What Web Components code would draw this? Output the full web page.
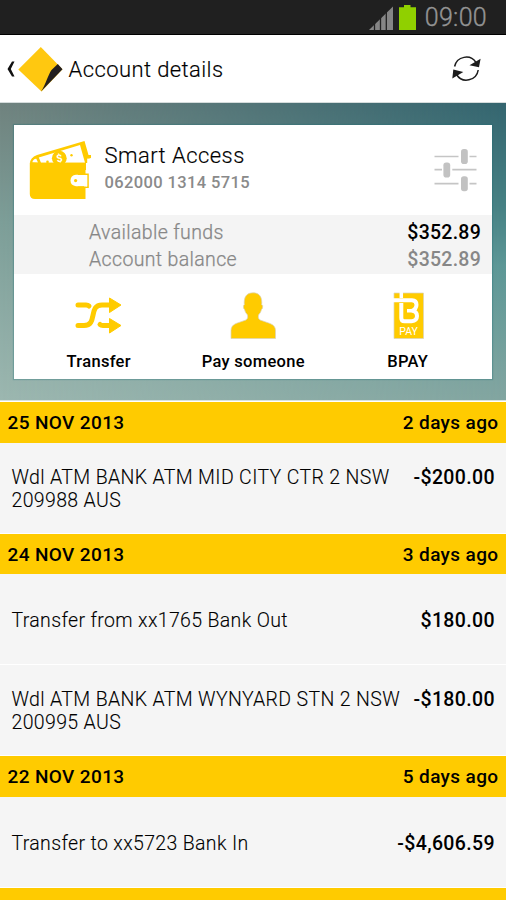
<!DOCTYPE html>
<html lang="en">
<head>
<meta charset="utf-8">
<title>Account details</title>
<style>
body{margin:0;width:506px;height:900px;overflow:hidden;background:#f5f5f5;color:#000;font-family:Roboto,"Liberation Sans",sans-serif;}
</style>
</head>
<body>
<bank-app></bank-app>
<script>
const define = (name, html) => customElements.define(name, class extends HTMLElement {
  connectedCallback() {
    if (this.shadowRoot) return;
    const t = document.createElement('template');
    t.innerHTML = html;
    this.attachShadow({mode: 'open'}).append(t.content.cloneNode(true));
  }
});

define('status-bar', `
<style>
:host{display:flex;box-sizing:border-box;height:35px;background:#202020;border-bottom:1px solid #000;justify-content:flex-end;align-items:flex-start;padding-right:19px;color:#959595}
svg{display:block}
span{font:300 25px/36px Roboto,sans-serif;letter-spacing:.3px;-webkit-text-stroke:.35px #959595;margin-left:7.5px}
</style>
<svg width="48" height="34" viewBox="369 0 48 34">
<path d="M369 30 L393 6.500V30Z" fill="#858585"/>
<path d="M374.500 22V30M380.500 16V30M386.300 10V30" stroke="#202020" stroke-width="1.300"/>
<path d="M399 7.300H404V5H410.500V7.300H416V30H399Z" fill="#90d000"/>
</svg><span>09:00</span>`);

define('title-bar', `
<style>
:host{display:flex;box-sizing:border-box;height:68px;background:#fff;border-bottom:1px solid #d5dcdc;align-items:center}
svg{display:block;flex:none}
h1{flex:1;margin:2px 0 0 4.600px;font:300 22px/30px Roboto,sans-serif;letter-spacing:.4px;-webkit-text-stroke:.15px #000;white-space:nowrap}
</style>
<svg width="64" height="67" viewBox="0 35 64 67">
<path d="M14.500 61.500H12L7.500 69 12 76.500H14.500L10.800 69Z" fill="#111"/>
<path d="M40.800 47 62.500 69.300 41.500 91.500 18.300 69.500Z" fill="#ffc810"/>
<path d="M57.800 64 62.500 69.300 41 91.500C46 84 48 75 51.500 70Z" fill="#231f20"/>
</svg>
<h1>Account details</h1>
<svg width="56" height="67" viewBox="450 35 56 67">
<g fill="none" stroke="#1c1c1c" stroke-width="1.500"><path d="M454.600 66.500A11.800 11.800 0 0 1 476 62.500"/><path d="M478.200 70A11.800 11.800 0 0 1 456.500 74.500"/></g>
<path d="M480.600 58.700 479 67.300 469.500 65.200Z M452.300 78.500 453.300 69.500 463.300 72Z" fill="#1c1c1c"/>
</svg>`);

define('action-tile', `
<style>
:host{display:flex;flex-direction:column;align-items:center;width:154.500px}
.i{height:70px}
.l{font:500 16.500px/20px Roboto,sans-serif;letter-spacing:.3px;white-space:nowrap}
</style>
<div class="i"><slot name="icon"></slot></div><div class="l"><slot></slot></div>`);

define('account-card', `
<style>
:host{display:block;width:478px;height:254px;background:#fff;box-shadow:0 0 1px 1px rgba(30,110,115,.3);position:relative}
header{display:flex;height:90px}
svg{display:block;flex:none}
.t{flex:1;padding-left:13.500px;white-space:nowrap}
.n{font:300 22px/28px Roboto,sans-serif;letter-spacing:.45px;-webkit-text-stroke:.15px #000;padding-top:17px}
.a{font:500 16.500px/20px Roboto,sans-serif;letter-spacing:.38px;color:#8a8a8a;margin-top:3px}
.f{height:59px;background:#f4f4f4;box-sizing:border-box;padding:5px 11px 0 75px;font:300 19.500px/26.500px Roboto,sans-serif;letter-spacing:.36px;color:#878787;-webkit-text-stroke:.25px #878787}
.f div{display:flex;justify-content:space-between}
b{font-weight:500;letter-spacing:.25px;-webkit-text-stroke:0}
.k{color:#000}
.acts{display:flex;height:97px;padding:8px 0 0 7.500px}
</style>
<header>
<svg width="77" height="90" viewBox="14 125 77 90">
<path d="M30 170V163.500Q30 157.500 37 155L84.500 141 88.500 155H94.500V158H89.500L91 163H86V170Z" fill="#ffcb00"/>
<path d="M84.500 155.500H91V158.200H84.500Z" fill="#ffcb00"/>
<path d="M87.200 158.600H92V165H87.200Z" fill="#fff"/>
<path d="M32.300 162.200Q33.300 158.500 36.300 158.700L38 162.500Z" fill="#fff"/>
<path d="M38.800 157.500 80 145 85 162.700H41Z" fill="#fff"/>
<circle cx="59.300" cy="158.200" r="7.400" fill="#ffcb00"/>
<circle cx="71.500" cy="155.300" r="1.200" fill="#ffcb00"/><circle cx="47.500" cy="161.900" r="1.300" fill="#ffcb00"/>
<text x="59.300" y="162" text-anchor="middle" font-family="Roboto" font-weight="700" font-size="10.500" fill="#fff" transform="rotate(-12 59.300 158)">$</text>
<path d="M29.800 162.700H85.500V199H35Q29.800 199 29.800 194Z" fill="#ffcb00"/>
<path d="M85.500 174.800H76Q70.500 175.500 70.500 180.500T76 186.200H85.500" fill="#fff"/>
<path d="M78 174.300H88V187.200H78" fill="none" stroke="#ffcb00" stroke-width="1.600"/>
<path d="M84 175.100H87.200V186.400H84Z" fill="#fff"/>
<circle cx="75.600" cy="180.600" r="1.600" fill="#ffcb00"/>
</svg>
<div class="t"><div class="n">Smart Access</div><div class="a">062000 1314 5715</div></div>
<svg width="62" height="90" viewBox="430 125 62 90">
<path d="M434.500 156.500H458.500M469.500 156.500H476.500M434.500 169.700H442M452.300 169.700H476.500M434.500 183.700H458.500M469.500 183.700H476.500" stroke="#c5c5c5" stroke-width="1.700"/>
<g fill="#c2c2c2"><rect x="461" y="149" width="6.800" height="15" rx="2.800"/><rect x="443.400" y="162.500" width="6.800" height="15" rx="2.800"/><rect x="461" y="176.300" width="6.800" height="15" rx="2.800"/></g>
</svg>
</header>
<div class="f"><div><span>Available funds</span><b class="k">$352.89</b></div><div><span>Account balance</span><b>$352.89</b></div></div>
<div class="acts">
<action-tile><svg slot="icon" width="50" height="70" viewBox="74 282 50 70">
<g fill="none" stroke="#ffcb00" stroke-width="5" stroke-linecap="round"><path d="M78 305H86Q88 305 89 306"/><path d="M78 325.500H84C98 325.500 88 305 102 305H110"/><path d="M100 324.500Q101 325.500 103 325.500H110"/></g>
<path d="M109.500 298V312.500L121 305Z M109.500 318.500V333L121 325.500Z" fill="#ffcb00" stroke="#ffcb00" stroke-width="1" stroke-linejoin="round"/></svg>Transfer</action-tile>
<action-tile><svg slot="icon" width="50" height="70" viewBox="228 282 50 70">
<path d="M231 338.500V330.500Q231 325.500 236 323.500L246 320Q248.500 318.500 247.500 315Q245 312.500 244.500 309.500Q243 308.500 243.500 305.500L244.300 305C243.500 296.500 247 292.800 253 292.800S262.500 296.500 261.700 305L262.700 305.500Q263 308.500 261.500 309.500Q261 312.500 258.500 315Q257.500 318.500 260 320L270 323.500Q275.500 325.500 275.500 330.500V338.500Z" fill="#ffcb00" stroke="#d8d2bc" stroke-width=".7"/></svg>Pay someone</action-tile>
<action-tile><svg slot="icon" width="50" height="70" viewBox="382 282 50 70">
<path d="M393 293H422.500V338.500H393Z" fill="#ffcb00" stroke="#d8d2bc" stroke-width=".7"/>
<path d="M392 300.300H411Q415.500 300.500 415.500 304.800T411 310.800Q416 311.300 416 316T410.500 321.300H403.500Q400.300 321.300 400.300 318V303" fill="none" stroke="#fff" stroke-width="4"/>
<path d="M400.300 292V298M406 310.800H411" fill="none" stroke="#fff" stroke-width="3.500"/>
<text x="407.600" y="334.800" text-anchor="middle" font-family="Roboto" font-weight="400" font-size="10.500" fill="#fff">PAY</text></svg>BPAY</action-tile>
</div>`);

define('hero-panel', `
<style>
:host{display:block;position:relative;box-sizing:border-box;height:298px;padding:22px 14px 0;background:linear-gradient(#70837f,#7d9e98 40%,#9cb7b0);border-bottom:1px solid #d7e2df}
:host::before{content:"";position:absolute;inset:0;background:linear-gradient(#34656f,#468184 35%,#5c9796 55%,#82a5a0);-webkit-mask:linear-gradient(to right,transparent,#000);mask:linear-gradient(to right,transparent,#000)}
</style><account-card></account-card>`);

define('day-header', `
<style>
:host{display:flex;box-sizing:border-box;height:40px;padding:0 7.500px;justify-content:space-between;background:#ffcb00;font:500 19px/42px Roboto,sans-serif;letter-spacing:.38px;white-space:nowrap}
</style><slot></slot><slot name="ago"></slot>`);

define('transaction-row', `
<style>
:host{display:flex;box-sizing:border-box;height:91px;align-items:center;justify-content:space-between;background:#f5f5f5;padding:2px 11px 0 11.500px;border-bottom:1px solid #fff;font:300 19.500px/23px Roboto,sans-serif;letter-spacing:.35px;white-space:nowrap}
.d{-webkit-text-stroke:.1px #000}
.m{font-weight:500;letter-spacing:.38px;align-self:flex-start;padding-top:var(--top,32.500px)}
</style><div class="d"><slot></slot></div><div class="m"><slot name="amount"></slot></div>`);

define('bank-app', `
<style>
:host{display:flex;flex-direction:column;width:506px;height:900px;overflow:hidden}
:host>*{flex:none}
.two{--top:20.500px}
.gap{height:1px;background:#fff}
.tall{height:41px}
</style>
<status-bar></status-bar><title-bar></title-bar><hero-panel></hero-panel><div class="gap"></div>
<day-header class="tall">25 NOV 2013<span slot="ago">2 days ago</span></day-header>
<transaction-row class="two">Wdl ATM BANK ATM MID CITY CTR 2 NSW<br>209988 AUS<span slot="amount">-$200.00</span></transaction-row>
<day-header>24 NOV 2013<span slot="ago">3 days ago</span></day-header>
<transaction-row>Transfer from xx1765 Bank Out<span slot="amount">$180.00</span></transaction-row>
<transaction-row class="two">Wdl ATM BANK ATM WYNYARD STN 2 NSW<br>200995 AUS<span slot="amount">-$180.00</span></transaction-row>
<day-header class="tall">22 NOV 2013<span slot="ago">5 days ago</span></day-header>
<transaction-row>Transfer to xx5723 Bank In<span slot="amount">-$4,606.59</span></transaction-row>
<day-header></day-header>`);
</script>
</body>
</html>
